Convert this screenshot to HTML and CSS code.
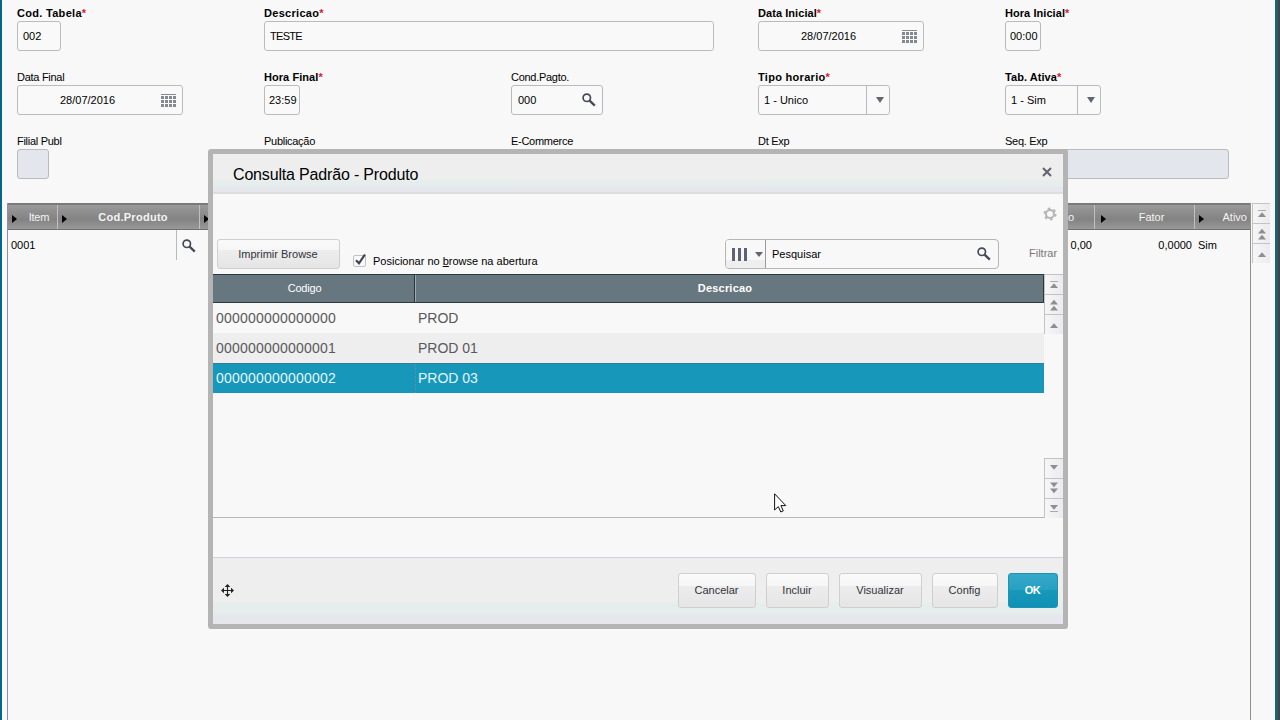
FILE: index.html
```html
<!DOCTYPE html>
<html lang="pt-BR">
<head>
<meta charset="utf-8">
<title>Consulta Padrão - Produto</title>
<link rel="stylesheet" href="styles.css">
</head>
<body>
<svg width="0" height="0" class="defs" aria-hidden="true">
  <symbol id="lens" viewBox="0 0 14 14"><circle cx="4.8" cy="4.8" r="3.7" fill="none" stroke="#454857" stroke-width="1.7"/><path d="M7.6 7.6 12.8 12.6" stroke="#454857" stroke-width="2.3"/></symbol>
  <symbol id="calendar" viewBox="0 0 15 13"><path d="M0 .5H15" stroke="#858890"/><path d="M0 3.5H15M0 7.5H15M0 11.5H15" stroke="#858890" stroke-width="3" stroke-dasharray="3 1"/></symbol>
  <symbol id="down" viewBox="0 0 8 6"><path d="M0 0H8L4 6Z" fill="#62666f"/></symbol>
  <symbol id="first" viewBox="0 0 10 10"><path d="M1 1.5H9" stroke="#aaa"/><path d="M1 8H9L5 3.2Z" fill="#8e8e8e"/></symbol>
  <symbol id="pageup" viewBox="0 0 10 12"><path d="M1 5.5H9L5 .8ZM1 11.5H9L5 6.8Z" fill="#8e8e8e"/></symbol>
  <symbol id="lineup" viewBox="0 0 10 10"><path d="M1 8H9L5 3.2Z" fill="#8e8e8e"/></symbol>
</svg>
<div class="screen">
  <main class="page">
    <div class="form">
      <div class="field"><label class="req loose">Cod. Tabela</label><div class="box w44">002</div></div>
      <div class="field span2"><label class="req loose">Descricao</label><div class="box w450"><span class="tight">TESTE</span></div></div>
      <div class="field"><label class="req">Data Inicial</label><div class="box date"><span>28/07/2016</span><svg width="15" height="13"><use href="#calendar"/></svg></div></div>
      <div class="field"><label class="req">Hora Inicial</label><div class="box time">00:00</div></div>

      <div class="field"><label>Data Final</label><div class="box date"><span>28/07/2016</span><svg width="15" height="13"><use href="#calendar"/></svg></div></div>
      <div class="field"><label class="req">Hora Final</label><div class="box time">23:59</div></div>
      <div class="field"><label>Cond.Pagto.</label><div class="box lookup"><span>000</span><svg width="14" height="14"><use href="#lens"/></svg></div></div>
      <div class="field"><label class="req loose">Tipo horario</label><div class="box select w132"><span>1 - Unico</span><i><svg width="8" height="6"><use href="#down"/></svg></i></div></div>
      <div class="field"><label class="req">Tab. Ativa</label><div class="box select w96"><span>1 - Sim</span><i><svg width="8" height="6"><use href="#down"/></svg></i></div></div>

      <div class="field"><label>Filial Publ</label><div class="box off w32"></div></div>
      <div class="field"><label>Publicação</label></div>
      <div class="field"><label>E-Commerce</label></div>
      <div class="field"><label>Dt Exp</label></div>
      <div class="field"><label>Seq. Exp</label><div class="box off w224"></div></div>
    </div>
    <div class="items">
      <div class="grid">
        <div class="ghead">
          <div class="gh item"><b class="mark"></b><span>Item</span></div>
          <div class="gh prod"><b class="mark"></b><span>Cod.Produto</span></div>
          <div class="gh rest"><b class="mark"></b><span>o</span></div>
          <div class="gh fator"><b class="mark"></b><span>Fator</span></div>
          <div class="gh ativo"><b class="mark"></b><span>Ativo</span></div>
        </div>
        <div class="grow">
          <div class="code">0001</div>
          <div class="find"><svg width="14" height="14"><use href="#lens"/></svg></div>
          <div class="price">0,00</div>
          <div class="factor">0,0000</div>
          <div class="active">Sim</div>
        </div>
      </div>
      <div class="pager">
        <span><svg width="10" height="10"><use href="#first"/></svg></span>
        <span><svg width="10" height="12"><use href="#pageup"/></svg></span>
        <span><svg width="10" height="10"><use href="#lineup"/></svg></span>
      </div>
    </div>
  </main>

  <section class="dialog">
    <header class="dhead"><h1>Consulta Padrão - Produto</h1>
      <svg width="10" height="10" viewBox="0 0 10 10"><path d="M1 1 9 9M9 1 1 9" stroke="#62646f" stroke-width="2.1"/></svg>
    </header>
    <div class="gear"><svg width="14" height="14" viewBox="0 0 14 14"><circle cx="7" cy="7" r="4" fill="none" stroke="#b5b5b7" stroke-width="2"/><circle cx="7" cy="7" r="5.6" fill="none" stroke="#b5b5b7" stroke-width="2" stroke-dasharray="2.6 3.264"/></svg></div>
    <div class="tools">
      <button class="btn print">Imprimir Browse</button>
      <div class="check">
        <svg width="15" height="15" viewBox="0 0 15 15"><rect x=".5" y="2.5" width="12" height="11" rx="1.5" fill="#f9f9f9" stroke="#bfc1c4"/><path d="M3 7.2 6 10.3 12 1.5" fill="none" stroke="#3f4255" stroke-width="2.2"/></svg>
        <span>Posicionar no <u>b</u>rowse na abertura</span>
      </div>
      <div class="search">
        <div class="cols"><svg width="16" height="13" viewBox="0 0 16 13"><path d="M1.5 0V13M7.5 0V13M13.5 0V13" stroke="#5d6278" stroke-width="3"/></svg><svg width="8" height="5" viewBox="0 0 8 6" preserveAspectRatio="none"><path d="M0 0H8L4 6Z" fill="#62666f"/></svg></div>
        <div class="query"><span>Pesquisar</span><svg width="14" height="14"><use href="#lens"/></svg></div>
      </div>
      <span class="filter">Filtrar</span>
    </div>
    <div class="browse">
      <div class="list">
        <div class="lrow lhead"><div>Codigo</div><div>Descricao</div></div>
        <div class="lrow"><div>000000000000000</div><div>PROD</div></div>
        <div class="lrow alt"><div>000000000000001</div><div>PROD 01</div></div>
        <div class="lrow sel"><div>000000000000002</div><div>PROD 03</div></div>
      </div>
      <div class="scroll">
        <div class="pager">
          <span><svg width="10" height="10"><use href="#first"/></svg></span>
          <span><svg width="10" height="12"><use href="#pageup"/></svg></span>
          <span><svg width="10" height="10"><use href="#lineup"/></svg></span>
        </div>
        <div class="pager flip">
          <span><svg width="10" height="10"><use href="#first"/></svg></span>
          <span><svg width="10" height="12"><use href="#pageup"/></svg></span>
          <span><svg width="10" height="10"><use href="#lineup"/></svg></span>
        </div>
      </div>
    </div>
    <footer class="dfoot">
      <svg class="move" width="13" height="13" viewBox="0 0 13 13"><path d="M6.5 1V12M1 6.5H12" stroke="#222" stroke-width="1.1"/><path d="M6.5 0 9.3 3H3.7ZM6.5 13 9.3 10H3.7ZM0 6.5 3 3.7V9.3ZM13 6.5 10 3.7V9.3Z" fill="#222"/></svg>
      <button class="btn b78">Cancelar</button>
      <button class="btn b63">Incluir</button>
      <button class="btn b83">Visualizar</button>
      <button class="btn b66">Config</button>
      <button class="btn ok">OK</button>
    </footer>
  </section>
  <svg class="cursor" width="13" height="20" viewBox="0 0 13 20"><path d="M.6 .8V17L4.3 13.6 6.8 19 9.3 17.9 6.9 12.6H11.8Z" fill="#fff" stroke="#111" stroke-width="1"/></svg>
</div>
</body>
</html>
```
FILE: styles.css
```css
* { box-sizing: border-box; }
body { margin: 0; font-family: "Liberation Sans", Arial, sans-serif; font-size: 11px; color: #000; }
svg { display: block; flex: none; }
.defs { position: absolute; }
.screen { position: relative; width: 1280px; height: 720px; overflow: hidden; background: #f8f8f8; border-left: 2px solid #00688a; border-right: 2px solid #3f444b; }
.page { height: 720px; display: flex; flex-direction: column; padding: 5px 5px 0; border-right: 3px solid #1b626e; }

.form { display: grid; grid-template-columns: repeat(5, 247px); grid-auto-rows: 64px; padding-left: 10px; height: 198px; }
.field { display: flex; flex-direction: column; align-items: flex-start; }
.span2 { grid-column: span 2; }
.field label { height: 16px; line-height: 17px; white-space: nowrap; letter-spacing: -.28px; }
.field .req { font-weight: bold; letter-spacing: .06px; }
.field .loose { letter-spacing: .3px; }
.tight { letter-spacing: -.7px; }
.req::after { content: "*"; color: #d8202a; }
.box { display: flex; align-items: center; height: 30px; border: 1px solid #b9bbbd; border-radius: 3px; background: #f9f9f9; padding-left: 5px; white-space: nowrap; }
.w44 { width: 44px; }
.w450 { width: 450px; }
.w132 { width: 132px; }
.w96 { width: 96px; }
.w32 { width: 32px; }
.w224 { width: 224px; }
.date { width: 166px; justify-content: space-between; padding: 0 6px 0 42px; }
.time { width: 36px; padding-left: 4px; }
.lookup { width: 92px; justify-content: space-between; padding: 0 6px 0 6px; }
.select { justify-content: space-between; }
.select i { display: flex; align-items: center; justify-content: center; width: 23px; height: 28px; border-left: 1px solid #b9bbbd; padding-left: 4px; }
.off { background: #e4e6ee; }

.items { display: flex; flex: 1; }
.grid { width: 1244px; flex: none; border-left: 1px solid #919191; border-right: 1px solid #919191; }
.ghead { display: flex; height: 27px; border-top: 2px solid #7a7a7a; border-bottom: 1px solid #707070; background: linear-gradient(#9a9a9a, #8c8c8c 35%, #838383 60%, #999); color: #f4f4f4; }
.gh { display: flex; align-items: center; border-left: 1px solid #c0c0c0; padding-left: 4px; }
.gh span { flex: 1; text-align: center; }
.mark { border-left: 5px solid #000; border-top: 4px solid transparent; border-bottom: 4px solid transparent; margin-top: 3px; }
.item { width: 49px; border-left: 0; }
.item span { text-align: right; padding-right: 8px; letter-spacing: -.3px; }
.prod { width: 142px; font-weight: bold; letter-spacing: .28px; }
.rest { flex: 1; }
.rest span { text-align: right; padding-right: 20px; }
.fator { width: 100px; padding-left: 6px; }
.fator span { padding-left: 3px; }
.ativo { width: 56px; }
.ativo span { text-align: right; padding-right: 3px; }
.grow { display: flex; height: 30px; line-height: 30px; }
.code { width: 168px; padding-left: 3px; }
.find { width: 30px; border-left: 1px solid #bbb; padding: 9px 0 0 5px; }
.price { flex: 1; text-align: right; }
.factor { width: 100px; text-align: right; }
.active { width: 58px; padding-left: 6px; }
.pager { width: 19px; margin-left: 1px; }
.pager span { display: flex; align-items: center; justify-content: center; height: 20px; border-top: 1px solid #c3c3c5; border-left: 1px solid #c3c3c5; background: linear-gradient(90deg, #f6f6f6, #ebebf0); }

.dialog { position: absolute; left: 206px; top: 149px; width: 860px; height: 480px; border: 5px solid #b4b4b4; border-radius: 3px; background: #f8f8f8; display: flex; flex-direction: column; }
.dhead { display: flex; justify-content: space-between; height: 40px; padding: 0 11px 0 20px; border-bottom: 2px solid #dedee0; background: linear-gradient(#eee 65%, #e6eded 72%, #e6eded 84%, #e6e6ed 90%); }
.dhead h1 { margin: 0; font-size: 16px; font-weight: normal; line-height: 41px; letter-spacing: -.17px; }
.dhead svg { margin-top: 13px; }
.gear { display: flex; justify-content: flex-end; height: 45px; padding: 13px 6px 0 0; }
.tools { display: flex; height: 35px; padding-left: 4px; }
.btn { height: 35px; padding: 0 1px 2px 0; border: 1px solid #cfcfd1; border-radius: 3px; background: linear-gradient(#fafafa 0, #f6f6f6 35%, #ededed 36%, #e5e5e5); font-family: inherit; font-size: 11px; color: #32343a; white-space: nowrap; }
.print { width: 123px; height: 30px; padding-bottom: 0; }
.check { display: flex; width: 385px; padding: 14px 0 0 13px; }
.check span { margin: 2px 0 0 5px; }
.search { display: flex; width: 274px; height: 30px; border: 1px solid #b6b6b8; border-radius: 4px; }
.cols { display: flex; align-items: center; gap: 7px; width: 40px; padding-left: 6px; border-right: 1px solid #9a9a9d; background: linear-gradient(#f8f8f8 70%, #eee 71%); border-radius: 3px 0 0 3px; }
.query { display: flex; flex: 1; align-items: center; justify-content: space-between; padding: 0 7px 0 6px; }
.filter { margin: 8px 0 0 30px; color: #77777a; }

.browse { display: flex; height: 244px; }
.list { width: 831px; border-bottom: 1px solid #b7b7b9; }
.lrow { display: flex; height: 30px; line-height: 30px; font-size: 14px; letter-spacing: .21px; color: #58595b; }
.lrow div { padding-left: 3px; }
.lrow div:first-child { width: 202px; }
.lrow div:last-child { flex: 1; letter-spacing: 0; }
.lhead { height: 29px; line-height: 27px; font-size: 11px; letter-spacing: 0; color: #fff; text-align: center; background: #67777f; border: 1px solid #2c373e; border-left: 0; }
.lrow.lhead div { padding: 0 18px 0 0; }
.lrow.lhead div:first-child { border-right: 1px solid #29343b; letter-spacing: -.2px; }
.lrow.lhead div:last-child { border-left: 1px solid #a0abb0; padding: 0 9px 0 0; font-weight: bold; letter-spacing: .2px; }
.alt { background: #eee; }
.sel { background: #1798ba; color: #e4f5fa; border-top: 1px solid #357d92; line-height: 29px; }
.lrow.sel div:last-child { border-left: 1px dotted #688e9c; padding-left: 2px; }
.scroll { display: flex; flex-direction: column; justify-content: space-between; flex: 1; }
.scroll .pager { margin: 0; }
.flip { transform: scaleY(-1); }
.flip span { border-top: 0; border-bottom: 1px solid #c3c3c5; }
.dfoot { display: flex; flex: 1; gap: 10px; margin-top: 39px; padding: 15px 5px 0 8px; border-top: 1px solid #cbd4db; background: linear-gradient(#eee 65%, #e6eded 71%, #e6eded 83%, #e6e6ed 89%); }
.move { margin: 11px auto 0 0; }
.b78 { width: 78px; }
.b63 { width: 63px; }
.b83 { width: 83px; }
.b66 { width: 66px; }
.ok { width: 50px; color: #fff; font-weight: bold; letter-spacing: -.5px; border-color: #2093b3; background: linear-gradient(#35a8c9, #27a0c2 49%, #1798bb 50%, #0f91b5); }
.cursor { position: absolute; left: 772px; top: 493px; }
```
